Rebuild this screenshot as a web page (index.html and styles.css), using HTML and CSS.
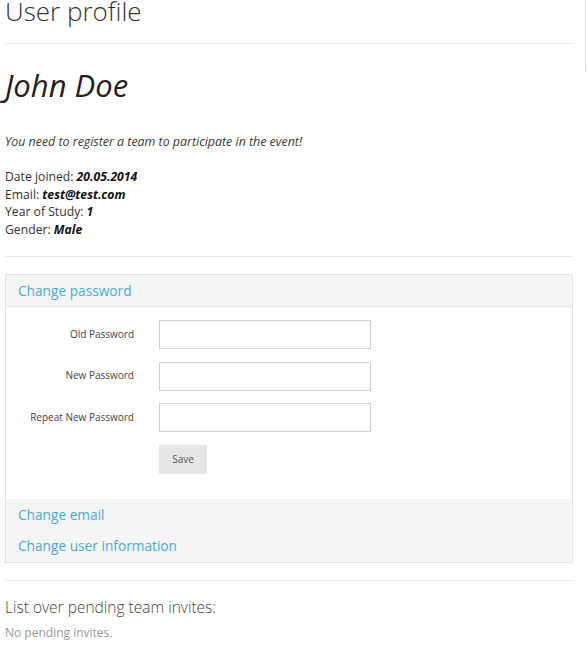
FILE: index.html
```html
<!DOCTYPE html>
<html>
<head>
<meta charset="utf-8">
<link rel="stylesheet" href="styles.css">
</head>
<body>
<div class="side-edge"></div>
<main class="page">
  <h1 class="page-title">User profile</h1>
  <hr class="divider first">
  <h2 class="name">John Doe</h2>
  <p class="notice">You need to register a team to participate in the event!</p>
  <div class="info">
    <div>Date joined: <b>20.05.2014</b></div>
    <div>Email: <b>test@test.com</b></div>
    <div>Year of Study: <b>1</b></div>
    <div>Gender: <b>Male</b></div>
  </div>
  <hr class="divider">
  <section class="panel">
    <div class="panel-head"><a href="#">Change password</a></div>
    <form class="panel-body">
      <label class="lbl">Old Password</label>
      <input class="field" type="password">
      <label class="lbl">New Password</label>
      <input class="field" type="password">
      <label class="lbl">Repeat New Password</label>
      <input class="field" type="password">
      <span></span>
      <button class="save" type="button">Save</button>
    </form>
    <div class="panel-links">
      <a href="#">Change email</a>
      <a href="#">Change user information</a>
    </div>
  </section>
  <hr class="divider after-panel">
  <h3 class="invites-title">List over pending team invites:</h3>
  <p class="invites-empty">No pending invites.</p>
</main>
</body>
</html>
```
FILE: styles.css
```css
html, body {
  margin: 0;
  padding: 0;
  background: #fff;
}
body {
  font-family: "Open Sans", "Liberation Sans", sans-serif;
  color: #333;
  position: relative;
}
.side-edge {
  position: absolute;
  left: 585px;
  top: 0;
  width: 2px;
  height: 72px;
  border-left: 1px solid #dcdcdc;
  border-bottom: 1px solid #dcdcdc;
  box-sizing: border-box;
}
.page {
  width: 568px;
  padding: 0 0 0 5px;
}
.page-title {
  margin: 0;
  font-size: 26px;
  font-weight: 300;
  line-height: 22px;
  color: #333;
}
.divider {
  border: 0;
  border-top: 1px solid #e6e6e6;
  height: 0;
  margin: 18px 0 0;
}
.divider.first {
  margin-top: 21px;
}
.name {
  margin: 21px 0 0;
  font-size: 31px;
  font-style: italic;
  font-weight: 400;
  line-height: 40px;
  color: #222;
}
.notice {
  margin: 28px 0 0;
  font-size: 12.4px;
  font-style: italic;
  line-height: 17px;
  color: #3a3a3a;
}
.info {
  margin-top: 18px;
  font-size: 12.2px;
  line-height: 17.5px;
  color: #333;
}
.info b {
  font-style: italic;
  font-weight: 700;
  color: #111;
}
.panel {
  margin-top: 17px;
  border: 1px solid #e3e3e3;
  background: #f5f5f5;
}
.panel a {
  color: #4aabd8;
  text-decoration: none;
  font-size: 13.7px;
}
.panel-head {
  height: 31px;
  line-height: 31px;
  padding-left: 12px;
  border-bottom: 1px solid #e8e8e8;
}
.panel-body {
  margin: 0;
  background: #fff;
  padding: 13px 0 25px 12px;
  display: grid;
  grid-template-columns: 116px 212px;
  column-gap: 25px;
  row-gap: 12.5px;
  align-items: center;
}
.lbl {
  text-align: right;
  font-size: 10px;
  line-height: 12px;
  margin-top: -2px;
  color: #444;
}
.field {
  box-sizing: border-box;
  height: 29px;
  margin: 0;
  border: 1px solid #d0d0d0;
  background: #fff;
  font: inherit;
}
.save {
  justify-self: start;
  box-sizing: border-box;
  width: 48px;
  height: 29px;
  border: 1px solid #e6e6e6;
  background: #e6e6e6;
  color: #555;
  font-family: "Open Sans", "Liberation Sans", sans-serif;
  font-size: 10px;
  padding: 0;
}
.panel-links {
  display: flex;
  flex-direction: column;
  gap: 11px;
  padding: 6px 12px 6px;
  line-height: 20px;
}
.divider.after-panel {
  margin-top: 17px;
}
.invites-title {
  margin: 16px 0 0;
  font-size: 15.5px;
  font-weight: 300;
  line-height: 20px;
  color: #444;
}
.invites-empty {
  margin: 7px 0 0;
  font-size: 12px;
  line-height: 17px;
  color: #999;
}
```
